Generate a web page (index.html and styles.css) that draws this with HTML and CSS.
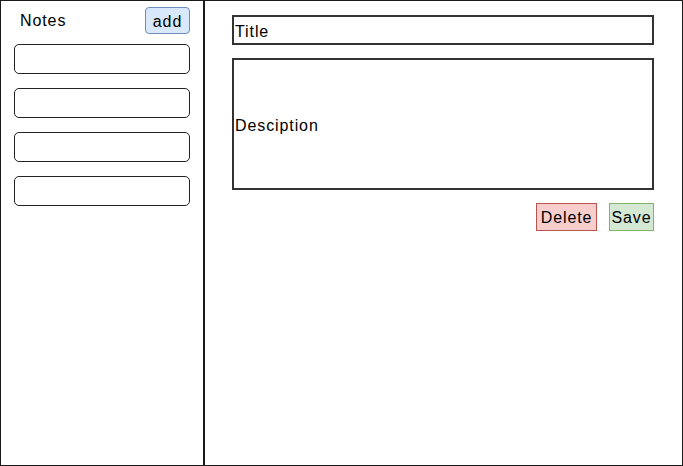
FILE: index.html
```html
<!DOCTYPE html>
<html>
<head>
<meta charset="utf-8">
<link rel="stylesheet" href="styles.css">
</head>
<body>
<div class="app">
  <aside class="sidebar">
    <div class="sidebar-header">
      <span class="sidebar-title">Notes</span>
      <button class="btn btn-add">add</button>
    </div>
    <ul class="note-list">
      <li class="note-item"></li>
      <li class="note-item"></li>
      <li class="note-item"></li>
      <li class="note-item"></li>
    </ul>
  </aside>
  <main class="editor">
    <div class="field field-title">Title</div>
    <div class="field field-desc">Desciption</div>
    <div class="actions">
      <button class="btn btn-delete">Delete</button>
      <button class="btn btn-save">Save</button>
    </div>
  </main>
</div>
</body>
</html>
```
FILE: styles.css
```css
* { box-sizing: border-box; }
html, body { margin: 0; padding: 0; background: #fff; }
body {
  font-family: "Liberation Sans", Arial, sans-serif;
  font-size: 16px;
  color: #000;
  letter-spacing: 0.9px;
}
.app {
  display: flex;
  width: 683px;
  height: 466px;
}
.sidebar {
  width: 204px;
  flex: none;
  border: 1px solid #1a1a1a;
  padding: 6px 13px 0 13px;
  display: flex;
  flex-direction: column;
}
.sidebar-header {
  display: flex;
  align-items: center;
  justify-content: space-between;
  height: 27px;
  margin-bottom: 10px;
  padding-left: 6px;
}
.sidebar-title { line-height: 1; }
.btn {
  font-family: inherit;
  font-size: 16px;
  letter-spacing: 0.9px;
  color: #000;
  padding: 2px 0 0 0;
  margin: 0;
  display: flex;
  align-items: center;
  justify-content: center;
}
.btn-add {
  width: 45px;
  height: 27px;
  background: #dae8fc;
  border: 1px solid #6c8ebf;
  border-radius: 4px;
}
.note-list {
  list-style: none;
  margin: 0;
  padding: 0;
  display: flex;
  flex-direction: column;
  gap: 14px;
}
.note-item {
  height: 30px;
  border: 1px solid #222;
  border-radius: 5px;
}
.editor {
  flex: 1;
  border: 1px solid #1a1a1a;
  padding: 14px 28px 0 27px;
  display: flex;
  flex-direction: column;
}
.field {
  border: 2px solid #333;
  display: flex;
  align-items: center;
  padding: 4px 0 0 1px;
}
.field-title { height: 30px; margin-bottom: 13px; }
.field-desc { height: 132px; margin-bottom: 13px; }
.actions {
  display: flex;
  justify-content: flex-end;
  gap: 12px;
}
.btn-delete {
  width: 61px;
  height: 28px;
  background: #f8cecc;
  border: 1px solid #b85450;
}
.btn-save {
  width: 45px;
  height: 28px;
  background: #d5e8d4;
  border: 1px solid #82b366;
}
```
